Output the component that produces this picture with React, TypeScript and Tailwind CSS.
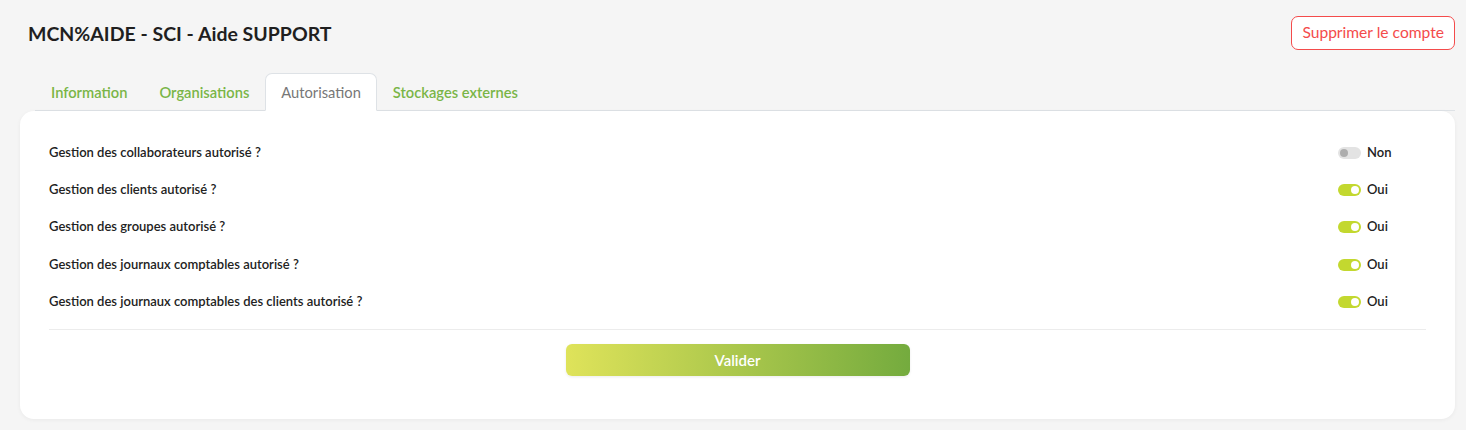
import { useState } from 'react';

type Permission = {
  key: string;
  label: string;
  enabled: boolean;
};

const initialPermissions: Permission[] = [
  { key: 'collaborators', label: 'Gestion des collaborateurs autorisé ?', enabled: false },
  { key: 'clients', label: 'Gestion des clients autorisé ?', enabled: true },
  { key: 'groups', label: 'Gestion des groupes autorisé ?', enabled: true },
  { key: 'journals', label: 'Gestion des journaux comptables autorisé ?', enabled: true },
  {
    key: 'clientJournals',
    label: 'Gestion des journaux comptables des clients autorisé ?',
    enabled: true,
  },
];

const tabs = ['Information', 'Organisations', 'Autorisation', 'Stockages externes'];

const Toggle = ({ on, onClick }: { on: boolean; onClick: () => void }) => (
  <button
    onClick={onClick}
    className={`relative h-[12px] w-[23px] rounded-full ${on ? 'bg-[#c3d82f]' : 'bg-[#e3e3e3]'}`}
  >
    <span
      className={`absolute top-[2px] h-[8px] w-[8px] rounded-full ${
        on ? 'right-[2px] bg-white' : 'left-[2px] bg-[#adadad]'
      }`}
    />
  </button>
);

export default function App() {
  const [activeTab, setActiveTab] = useState('Autorisation');
  const [permissions, setPermissions] = useState(initialPermissions);

  const toggle = (key: string) =>
    setPermissions((list) =>
      list.map((p) => (p.key === key ? { ...p, enabled: !p.enabled } : p)),
    );

  return (
    <div className="min-h-[430px] bg-[#f5f5f5] pl-[20px] pr-[11px] pt-[16px] font-['Lato',sans-serif] text-[#1f1f1f]">
      {/* header */}
      <div className="flex items-start justify-between">
        <h1 className="ml-[8px] mt-[3px] text-[19.5px] font-bold">
          MCN%AIDE - SCI - Aide SUPPORT
        </h1>
        <button className="h-[34px] rounded-[7px] border border-[#f44b4b] bg-white px-[10px] text-[15.6px] text-[#f44b4b]">
          Supprimer le compte
        </button>
      </div>

      {/* tabs */}
      <div className="ml-[15px] mt-[23px] flex border-b border-[#dee2e6]">
        {tabs.map((tab) => (
          <button
            key={tab}
            onClick={() => setActiveTab(tab)}
            className={`-mb-px h-[38px] rounded-t-[7px] border px-[15px] pt-[1px] text-[14.7px] ${
              activeTab === tab
                ? 'border-[#dee2e6] border-b-white bg-white font-normal text-[#777777]'
                : 'border-transparent font-semibold text-[#7ab547]'
            }`}
          >
            {tab}
          </button>
        ))}
      </div>

      {/* card */}
      <div className="rounded-[14px] bg-white px-[29px] pb-[43px] pt-[23px] shadow-[0_1px_4px_rgba(0,0,0,0.05)]">
        {permissions.map((p) => (
          <div key={p.key} className="flex h-[37.3px] items-center justify-between">
            <span className="text-[13px] font-semibold text-[#222]">{p.label}</span>
            <div className="flex w-[88px] items-center gap-[6px]">
              <Toggle on={p.enabled} onClick={() => toggle(p.key)} />
              <span className="text-[13px] font-semibold text-[#222]">
                {p.enabled ? 'Oui' : 'Non'}
              </span>
            </div>
          </div>
        ))}
        <hr className="mt-[9px] border-[#ececec]" />
        <div className="mt-[14px] flex justify-center">
          <button className="h-[32px] w-[344px] rounded-[6px] bg-gradient-to-r from-[#dfe35a] to-[#74ab3e] text-[15px] font-semibold text-white shadow-[0_1px_3px_rgba(0,0,0,0.08)]">
            Valider
          </button>
        </div>
      </div>
    </div>
  );
}
